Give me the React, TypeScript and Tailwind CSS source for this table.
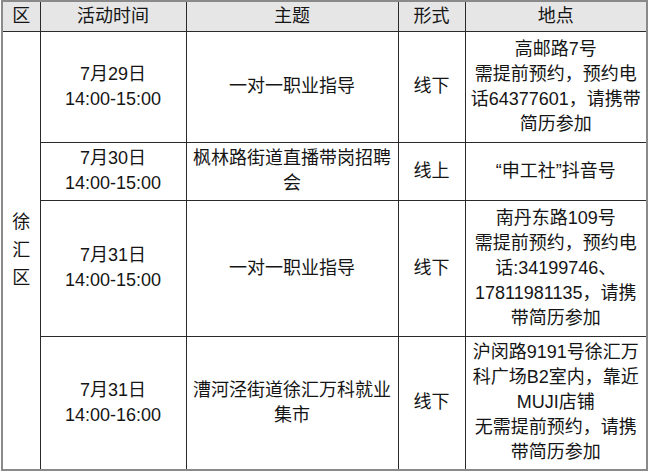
const rows = [
  {
    date: "7月29日",
    time: "14:00-15:00",
    topic: ["一对一职业指导"],
    form: "线下",
    place: ["高邮路7号", "需提前预约，预约电", "话64377601，请携带", "简历参加"],
    h: "h-[111px]",
  },
  {
    date: "7月30日",
    time: "14:00-15:00",
    topic: ["枫林路街道直播带岗招聘", "会"],
    form: "线上",
    place: ["“申工社”抖音号"],
    h: "h-[58px]",
  },
  {
    date: "7月31日",
    time: "14:00-15:00",
    topic: ["一对一职业指导"],
    form: "线下",
    place: ["南丹东路109号", "需提前预约，预约电", "话:34199746、", "17811981135，请携", "带简历参加"],
    h: "h-[136px]",
  },
  {
    date: "7月31日",
    time: "14:00-16:00",
    topic: ["漕河泾街道徐汇万科就业", "集市"],
    form: "线下",
    place: ["沪闵路9191号徐汇万", "科广场B2室内，靠近", "MUJI店铺", "无需提前预约，请携", "带简历参加"],
    h: "h-[134px]",
  },
]

function Lines({ items }: { items: string[] }) {
  return (
    <>
      {items.map((t) => (
        <div key={t} className="whitespace-nowrap">
          {t}
        </div>
      ))}
    </>
  )
}

export default function App() {
  const cell = "border border-[#2a2a2a] text-center align-middle p-0"
  return (
    <div className="w-[649px] h-[472px] bg-white pl-px font-['Liberation_Sans','Noto_Sans_CJK_SC',sans-serif] text-[18px] leading-[25px] text-[#151515]">
      <table className="w-[645px] border-collapse border-2 border-[#8a8a8a] table-fixed">
        <colgroup>
          <col className="w-[38px]" />
          <col className="w-[146px]" />
          <col className="w-[212px]" />
          <col className="w-[67px]" />
          <col className="w-[182px]" />
        </colgroup>
        <thead>
          <tr className="h-[30px] bg-[#e6e6e6]">
            <th className={`${cell} font-normal`}>区</th>
            <th className={`${cell} font-normal`}>活动时间</th>
            <th className={`${cell} font-normal`}>主题</th>
            <th className={`${cell} font-normal`}>形式</th>
            <th className={`${cell} font-normal`}>地点</th>
          </tr>
        </thead>
        <tbody>
          {rows.map((r, i) => (
            <tr key={i} className={r.h}>
              {i === 0 && (
                <td rowSpan={4} className={cell}>
                  <div className="flex flex-col items-center leading-[28px]">
                    <span>徐</span>
                    <span>汇</span>
                    <span>区</span>
                  </div>
                </td>
              )}
              <td className={cell}>
                <div>{r.date}</div>
                <div>{r.time}</div>
              </td>
              <td className={cell}>
                <Lines items={r.topic} />
              </td>
              <td className={cell}>{r.form}</td>
              <td className={cell}>
                <Lines items={r.place} />
              </td>
            </tr>
          ))}
        </tbody>
      </table>
    </div>
  )
}
